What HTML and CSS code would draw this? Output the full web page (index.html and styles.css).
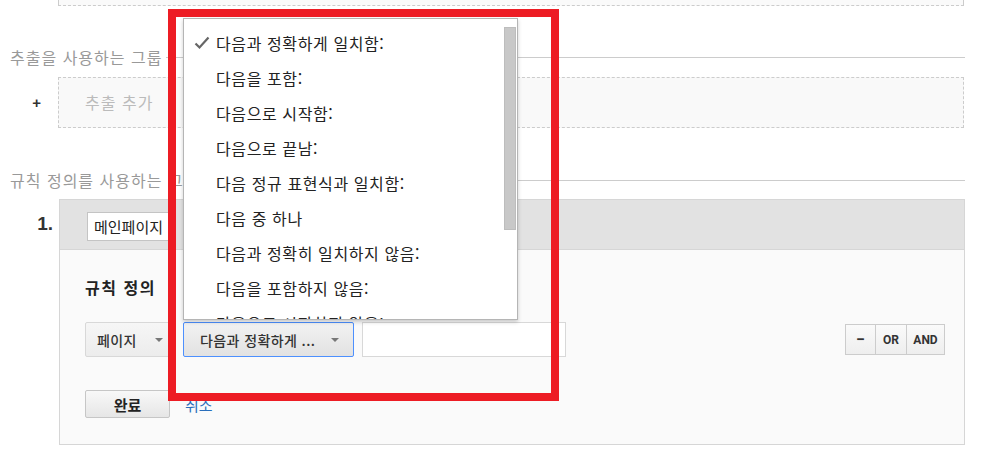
FILE: index.html
```html
<!DOCTYPE html>
<html lang="ko">
<head>
    <meta charset="UTF-8">
    <meta name="viewport" content="width=device-width, initial-scale=1.0">
    <title>콘텐츠 그룹 설정</title>
    <link rel="stylesheet" href="styles.css">
</head>
<body>
    <div class="page">
        <div class="prev-box"></div>

        <div class="section-title">
            <span>추출을 사용하는 그룹</span>
            <div class="section-line"></div>
        </div>
        <div class="add-row">
            <span class="add-plus">+</span>
            <div class="add-box">추출 추가</div>
        </div>

        <div class="section-title section-rules">
            <span>규칙 정의를 사용하는 그룹</span>
            <div class="section-line"></div>
        </div>

        <div class="rule-row">
            <span class="rule-num">1.</span>
            <div class="rule-box">
                <div class="rule-head">
                    <input type="text" class="rule-name" value="메인페이지">
                </div>
                <div class="rule-body">
                    <h3 class="rule-title">규칙 정의</h3>
                    <div class="cond-row">
                        <button type="button" class="select-btn dim-btn">페이지<span class="caret"></span></button>
                        <button type="button" class="select-btn match-btn">다음과 정확하게 ...<span class="caret"></span></button>
                        <input type="text" class="cond-value">
                        <div class="logic-btns">
                            <button type="button">&minus;</button>
                            <button type="button">OR</button>
                            <button type="button">AND</button>
                        </div>
                    </div>
                    <div class="form-actions">
                        <button type="button" class="done-btn">완료</button>
                        <a href="#" class="cancel-link">취소</a>
                    </div>
                </div>
            </div>
        </div>

        <div class="match-menu">
            <ul class="menu-list">
                <li class="selected"><span class="check"><svg width="16" height="14" viewBox="0 0 16 14"><path d="M1.5 7.5 L5.5 11.5 L14.5 1.5" fill="none" stroke="#666" stroke-width="2.2"/></svg></span>다음과 정확하게 일치함:</li>
                <li><span class="check"></span>다음을 포함:</li>
                <li><span class="check"></span>다음으로 시작함:</li>
                <li><span class="check"></span>다음으로 끝남:</li>
                <li><span class="check"></span>다음 정규 표현식과 일치함:</li>
                <li><span class="check"></span>다음 중 하나</li>
                <li><span class="check"></span>다음과 정확히 일치하지 않음:</li>
                <li><span class="check"></span>다음을 포함하지 않음:</li>
                <li><span class="check"></span>다음으로 시작하지 않음:</li>
                <li><span class="check"></span>다음으로 끝나지 않음:</li>
            </ul>
            <div class="menu-scroll"><div class="menu-thumb"></div></div>
        </div>

        <div class="highlight"></div>
    </div>
</body>
</html>
```

FILE: styles.css
```css
body { margin: 0; background: #fff; font-family: "Noto Sans CJK KR", "Noto Sans", sans-serif; color: #333; }
.page { position: relative; padding: 0 23px 0 10px; height: 472px; overflow: hidden; }

.prev-box { margin-left: 48px; margin-right: 1px; height: 5px; border: 1px dashed #ccc; border-top: none; background: #fafafa; }

.section-title { display: flex; align-items: center; gap: 4px; margin-top: 41px; height: 20px; font-size: 16px; line-height: 20px; color: #999; letter-spacing: 1px; white-space: nowrap; }
.section-line { flex: 1; height: 1px; background: #ccc; }
.section-rules { margin-top: 42px; }

.add-row { display: flex; margin-top: 10px; }
.add-plus { width: 31px; padding-right: 17px; text-align: right; font-family: "Liberation Sans", sans-serif; font-weight: bold; font-size: 15px; line-height: 51px; color: #333; }
.add-box { flex: 1; margin-right: 1px; height: 49px; border: 1px dashed #ccc; background: #f9f9f9; padding-left: 26px; font-size: 16px; line-height: 49px; color: #bbb; letter-spacing: 1px; }

.rule-row { display: flex; margin-top: 9px; }
.rule-num { width: 43px; padding-right: 6px; text-align: right; font-family: "Liberation Sans", sans-serif; font-weight: bold; font-size: 19px; line-height: 50px; color: #333; }
.rule-box { flex: 1; border: 1px solid #d6d6d6; background: #fafafa; }
.rule-head { height: 50px; background: #e2e2e2; border-bottom: 1px solid #d6d6d6; padding: 12px 0 0 27px; box-sizing: border-box; }
.rule-name { width: 85px; height: 29px; box-sizing: border-box; border: 1px solid #c4c4c4; padding: 0 6px; font-family: inherit; font-size: 15px; color: #222; background: #fff; }

.rule-body { padding: 27px 19px 26px 25px; }
.rule-title { margin: 0; font-size: 16px; line-height: 20px; font-weight: bold; color: #222; letter-spacing: 1.5px; }

.cond-row { display: flex; align-items: center; margin-top: 25px; }
.select-btn { display: flex; align-items: center; justify-content: space-between; height: 35px; box-sizing: border-box; border: 1px solid #d8d8d8; border-radius: 2px; background: linear-gradient(#f6f6f6, #ececec); font-family: inherit; font-size: 14px; font-weight: 500; color: #333; padding: 0 14px 0 16px; letter-spacing: 0.4px; }
.dim-btn { width: 86px; padding: 0 7px 0 11px; }
.match-btn { width: 171px; margin-left: 12px; border-color: #4d90fe; background: linear-gradient(#f2f2f2, #e2e2e2); }
.caret { width: 0; height: 0; border-left: 4px solid transparent; border-right: 4px solid transparent; border-top: 4px solid #777; }
.cond-value { width: 204px; height: 35px; box-sizing: border-box; margin-left: 8px; border: 1px solid #d8d8d8; background: #fff; }

.logic-btns { display: flex; margin-left: auto; }
.logic-btns button { height: 31px; min-width: 30px; box-sizing: border-box; border: 1px solid #ccc; margin-left: -1px; background: linear-gradient(#fafafa, #eeeeee); font-family: Roboto, "Liberation Sans", sans-serif; font-weight: bold; font-size: 12px; color: #333; padding: 0 4px; }
.logic-btns button:first-child { width: 31px; font-size: 16px; }
.logic-btns button:nth-child(2) { width: 32px; }
.logic-btns button:last-child { width: 39px; }

.form-actions { display: flex; align-items: center; gap: 15px; margin-top: 33px; }
.done-btn { width: 85px; height: 28px; border: 1px solid #c6c6c6; border-radius: 2px; background: linear-gradient(#f8f8f8, #e6e6e6); font-family: inherit; font-weight: bold; font-size: 15px; color: #222; }
.cancel-link { font-size: 15px; color: #2a6ebb; text-decoration: none; }

.match-menu { position: absolute; left: 183px; top: 18px; width: 335px; height: 302px; box-sizing: border-box; display: flex; background: #fff; border: 1px solid #b5b5b5; box-shadow: 0 2px 4px rgba(0, 0, 0, 0.2); overflow: hidden; }
.menu-list { flex: 1; list-style: none; margin: 0; padding: 6px 0 0 10px; }
.menu-list li { display: flex; align-items: center; height: 35px; font-size: 16px; color: #222; letter-spacing: 0.6px; white-space: nowrap; }
.check { display: inline-flex; width: 22px; }
.menu-scroll { width: 12px; padding: 8px 1px 0 0; }
.menu-thumb { height: 203px; box-sizing: border-box; background: #c8c8c8; border: 1px solid #bdbdbd; }

.highlight { position: absolute; left: 168px; top: 9px; width: 391px; height: 392px; box-sizing: border-box; border: 8px solid #ed1c24; pointer-events: none; }
```
